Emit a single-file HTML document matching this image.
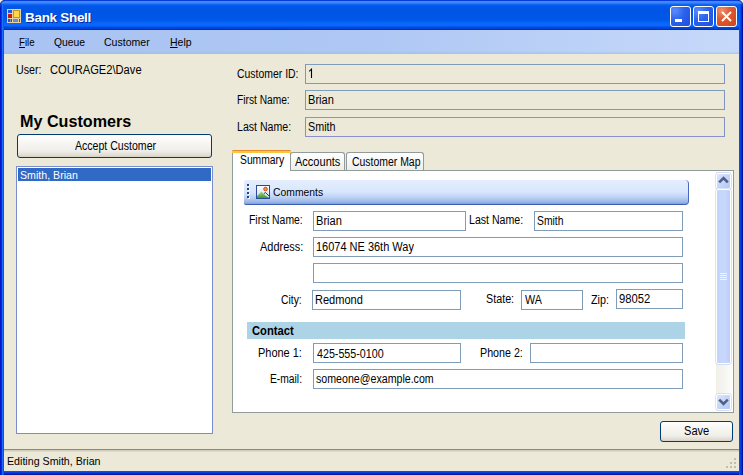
<!DOCTYPE html>
<html><head><meta charset="utf-8">
<style>
*{margin:0;padding:0;box-sizing:border-box}
html,body{width:743px;height:475px;overflow:hidden;background:#fff;font-family:"Liberation Sans",sans-serif;font-size:11px;color:#000}
.a{position:absolute}
#win{position:absolute;left:0;top:0;width:743px;height:475px;background:linear-gradient(to right,#0018C8 0,#0018C8 1px,#0828DC 1px,#0828DC 2px,#1C6AFF 2px,#1C6AFF 3px,#0C50EC 3px) left/4px 100% no-repeat,linear-gradient(to left,#0010A0 0,#0010A0 1px,#0030D0 1px,#0030D0 2px,#0840E0 2px,#0840E0 3px,#0A50F0 3px) right/4px 100% no-repeat,linear-gradient(to top,#0818A0 0,#0818A0 1px,#0030C8 1px,#0030C8 2px,#0840E0 2px,#0840E0 3px,#0A50F0 3px) bottom/100% 4px no-repeat,#0831D9;border-radius:5px 5px 0 0}
#title{position:absolute;left:0;top:0;width:743px;height:30px;border-radius:5px 5px 0 0;
 background:linear-gradient(to bottom,#0A3CD8 0px,#0A3CD8 1px,#3C8CFF 1px,#3A88FF 3px,#1868F4 4px,#0058E8 6px,#0055E5 12px,#0057E8 20px,#0866FC 23px,#0868FF 26px,#0048D8 27px,#0040D4 29px,#0030C8 29px,#0030C8 30px)}
#ttext{left:25px;top:10px;color:#fff;font-weight:bold;font-size:13.5px;letter-spacing:-0.3px;text-shadow:1px 1px 0 #0A2A9A}
.tb{position:absolute;top:6px;width:21px;height:21px;border:1px solid #fff;border-radius:3px;
 background:radial-gradient(circle at 20% 20%,#5C8CFA 0,#2C62EE 45%,#1D4EDC 100%)}
#menu{left:4px;top:30px;width:735px;height:24px;background:linear-gradient(to right,#A9C3F2 0,#AEC7F4 50%,#C7D9FA 100%)}
.mi{position:absolute;top:6px;font-size:11px;white-space:nowrap;letter-spacing:-0.2px}
.tbox{position:absolute;height:20px;border:1px solid #7F9DB9;background:#fff;padding:2px 0 0 2px;font-size:11px;letter-spacing:-0.2px;white-space:nowrap}
.ro{background:#ECE9D8;border-color:#7F9DB9 #7F93C4 #8A90CE #7F93C4}
.btn{position:absolute;border:1px solid #003C74;border-radius:3px;background:linear-gradient(to bottom,#FFFFFF 0,#F8F7F3 30%,#F0EFEA 70%,#E2DED4 90%,#D6D0C5 100%);text-align:center;font-size:11px;letter-spacing:-0.2px}
.t{position:absolute;white-space:nowrap;transform-origin:0 0;line-height:normal}
.tab{position:absolute;border:1px solid #919B9C;border-bottom:none;border-radius:3px 3px 0 0;background:linear-gradient(to bottom,#FFFFFF 0,#F7F7F4 50%,#EEEDE6 100%)}
.sbtn{position:absolute;width:15px;height:16px;border:1px solid #fff;border-radius:2px;background:linear-gradient(to bottom right,#DCE6FC 0,#C6D5FB 50%,#B4C8F6 100%);box-shadow:0 0 0 0.5px #B8C8EC}
</style></head><body>
<div id="win">
 <div id="title">
  <svg class="a" style="left:7px;top:9px" width="14" height="14" viewBox="0 0 14 14">
   <rect x="0" y="0" width="14" height="14" fill="#E8D0A0"/>
   <rect x="1" y="1" width="4" height="3" fill="#1C5CE0"/>
   <rect x="1" y="5" width="4" height="4" fill="#C81810"/>
   <rect x="6" y="1" width="7" height="8" fill="#C89418"/>
   <rect x="7" y="2" width="5" height="6" fill="#FFD84A"/>
   <rect x="1" y="10" width="2" height="3" fill="#2050D8"/>
   <rect x="3.5" y="10" width="1.5" height="3" fill="#2050D8"/>
   <rect x="6" y="10" width="5" height="3" fill="#6A88E0"/>
   <rect x="12" y="10" width="1" height="3" fill="#2050D8"/>
  </svg>
  <div id="ttext" class="a">Bank Shell</div>
  <div class="tb" style="left:670px"><div class="a" style="left:4px;top:12px;width:7px;height:3px;background:#fff"></div></div>
  <div class="tb" style="left:693px"><div class="a" style="left:4px;top:4px;width:11px;height:11px;border:1px solid #fff;border-top-width:3px"></div></div>
  <div class="tb" style="left:716px;background:radial-gradient(circle at 25% 20%,#F09070 0,#E05A30 40%,#CC4420 100%)">
   <svg class="a" style="left:4px;top:4px" width="11" height="11" viewBox="0 0 11 11"><path d="M1 1L10 10M10 1L1 10" stroke="#fff" stroke-width="2"/></svg>
  </div>
 </div>
 <div class="a" style="left:739px;top:4px;width:4px;height:26px;border-top-right-radius:4px;background:linear-gradient(to left,#0010A0 0,#0010A0 1px,#0030D0 1px,#0030D0 2px,#0848E8 2px,#0848E8 3px,#0A58F4 3px)"></div>
 <div class="a" style="left:0;top:4px;width:4px;height:26px;border-top-left-radius:4px;background:linear-gradient(to right,#0018C8 0,#0018C8 1px,#0838E0 1px,#0838E0 2px,#2070FF 2px,#2070FF 3px,#0C58F0 3px)"></div>
 <!-- corners -->
 <svg class="a" style="left:0;top:0" width="6" height="6" viewBox="0 0 6 6"><path d="M0 0H5Q0.5 0.5 0 5Z" fill="#F0F0E0"/><path d="M5 0.5Q0.5 0.5 0.5 5" stroke="#0A2AB0" stroke-width="1" fill="none"/></svg>
 <svg class="a" style="left:737px;top:0" width="6" height="6" viewBox="0 0 6 6"><path d="M1 0H6V5Q5.5 0.5 1 0Z" fill="#F0F0E0"/><path d="M1 0.5Q5.5 0.5 5.5 5" stroke="#0A2AB0" stroke-width="1" fill="none"/></svg>
 <div id="menu" class="a">



 </div>
 <div class="a" style="left:4px;top:51px;width:735px;height:3px;background:linear-gradient(to bottom,rgba(160,190,232,0),rgba(150,186,228,0.55))"></div>
 <div class="a" style="left:4px;top:54px;width:735px;height:417px;background:#ECE9D8"></div>
</div>
<!-- left panel -->
<div class="btn" style="left:17px;top:134px;width:195px;height:24px;padding-top:5px;padding-left:2px;letter-spacing:-0.1px"></div>
<div class="a" style="left:16px;top:166px;width:197px;height:268px;border:1px solid #7C8DCF;background:#fff">
 <div class="a" style="left:1px;top:1px;width:193px;height:13px;background:#316AC5;color:#fff;"></div>
</div>
<!-- right top -->
<div class="tbox ro" style="left:305px;top:64px;width:420px"></div>
<div class="tbox ro" style="left:305px;top:90px;width:420px"></div>
<div class="tbox ro" style="left:305px;top:117px;width:420px"></div>
<!-- tabs -->
<div class="a" style="left:232px;top:170px;width:502px;height:243px;border:1px solid #919B9C;background:#fff"></div>
<div class="tab" style="left:290px;top:152px;width:55px;height:18px"></div>
<div class="tab" style="left:346px;top:152px;width:78px;height:18px"></div>
<div class="a" style="left:232px;top:150px;width:59px;height:21px;border-left:1px solid #919B9C;border-right:1px solid #919B9C;border-radius:2px 2px 0 0;background:linear-gradient(to bottom,#E68B2C 0,#E68B2C 1px,#FFC83C 1px,#FFC83C 3px,#fff 3px)"></div>
<div class="a" style="left:232px;top:150px;width:59px;height:3px;border-radius:2px 2px 0 0;background:linear-gradient(to bottom,#E68B2C 0,#E68B2C 1px,#FFC83C 1px,#FFC83C 3px)"></div>
<!-- scrollbar -->
<div class="a" style="left:716px;top:172px;width:16px;height:239px;background:linear-gradient(to right,#F0EFE8,#FCFCF9)"></div>
<div class="sbtn" style="left:716px;top:173px"></div>
<svg class="a" style="left:718px;top:176px" width="11" height="8" viewBox="0 0 11 8"><path d="M1.2 6.3L5.5 2L9.8 6.3" stroke="#4D6185" stroke-width="2.6" fill="none"/></svg>
<div class="sbtn" style="left:716px;top:189px;height:175px;background:linear-gradient(to right,#C4D4FB 0,#C8D7FC 60%,#BCCDF8 100%)"></div>
<div class="a" style="left:720px;top:273px;width:7px;height:1px;background:#EEF4FE;box-shadow:0 2px 0 #EEF4FE,0 4px 0 #EEF4FE,0 6px 0 #EEF4FE"></div>
<div class="sbtn" style="left:716px;top:394px"></div>
<svg class="a" style="left:718px;top:398px" width="11" height="8" viewBox="0 0 11 8"><path d="M1.2 1.7L5.5 6L9.8 1.7" stroke="#4D6185" stroke-width="2.6" fill="none"/></svg>
<!-- comments bar -->
<div class="a" style="left:244px;top:180px;width:445px;height:25px;border-radius:2px 4px 4px 2px;border-right:1px solid #4868C0;border-bottom:1px solid #3D5DB0;background:linear-gradient(to bottom,#E4EEFE 0,#D8E6FC 50%,#BDD2F5 72%,#9AB6E8 92%,#7E9FE0 100%)"></div>
<div class="a" style="left:247px;top:184px;width:2px;height:2px;background:#23438C;box-shadow:1px 1px 0 #fff,0 4px 0 #23438C,1px 5px 0 #fff,0 8px 0 #23438C,1px 9px 0 #fff,0 12px 0 #23438C,1px 13px 0 #fff"></div>
<svg class="a" style="left:256px;top:185px" width="14" height="14" viewBox="0 0 14 14">
 <defs><linearGradient id="sky" x1="0" y1="0" x2="0" y2="1"><stop offset="0" stop-color="#FFFFFF"/><stop offset="1" stop-color="#C8DCF4"/></linearGradient>
 <linearGradient id="hill" x1="0" y1="0" x2="0" y2="1"><stop offset="0" stop-color="#A8D880"/><stop offset="1" stop-color="#3C9A2A"/></linearGradient></defs>
 <rect x="0.5" y="0.5" width="13" height="13" fill="url(#sky)" stroke="#2C4A9C"/>
 <path d="M1 13V11L5.5 6.5L10 11L13 12.5V13Z" fill="url(#hill)"/>
 <path d="M8 8.5L9.5 7.5L13 11" stroke="#2A3A5A" stroke-width="1" fill="none"/>
 <circle cx="9.5" cy="4" r="1.8" fill="#F0A020" stroke="#D83A20" stroke-width="0.9"/>
</svg>
<!-- form -->
<div class="tbox" style="left:313px;top:211px;width:153px"></div>
<div class="tbox" style="left:534px;top:211px;width:149px"></div>
<div class="tbox" style="left:313px;top:237px;width:370px"></div>
<div class="tbox" style="left:313px;top:263px;width:370px"></div>
<div class="tbox" style="left:312px;top:290px;width:149px"></div>
<div class="tbox" style="left:521px;top:290px;width:62px"></div>
<div class="tbox" style="left:616px;top:289px;width:67px"></div>
<div class="a" style="left:247px;top:322px;width:438px;height:17px;background:#ADD3E6"></div>
<div class="tbox" style="left:313px;top:343px;width:148px"></div>
<div class="tbox" style="left:530px;top:343px;width:153px"></div>
<div class="tbox" style="left:313px;top:369px;width:370px"></div>
<!-- status -->
<div class="a" style="left:4px;top:449px;width:735px;height:22px;background:#ECE9D8;border-top:1px solid #8F8C7A"></div>
<div class="a" style="left:4px;top:450px;width:735px;height:2px;background:linear-gradient(to bottom,#C8C5B3,#E4E1CF)"></div>
<!-- grip -->
<div class="a" style="left:734px;top:466px;width:2px;height:2px;background:#C2BEAC;box-shadow:-4px 0 0 #C2BEAC,-8px 0 0 #C2BEAC,0 -4px 0 #C2BEAC,-4px -4px 0 #C2BEAC,0 -8px 0 #C2BEAC"></div>
<!-- save -->
<div class="btn" style="left:660px;top:421px;width:73px;height:21px;padding-top:4px;letter-spacing:0.2px"></div>
<div class="t" style="left:19.00px;top:36px;font-size:11px;transform:scaleX(0.8824);"><u>F</u>ile</div>
<div class="t" style="left:54.00px;top:36px;font-size:11px;transform:scaleX(0.9394);">Queue</div>
<div class="t" style="left:104.04px;top:36px;font-size:11px;transform:scaleX(0.9574);">Customer</div>
<div class="t" style="left:170.00px;top:36px;font-size:11px;transform:scaleX(0.9545);"><u>H</u>elp</div>
<div class="t" style="left:273.06px;top:186px;font-size:11px;transform:scaleX(0.9423);">Comments</div>
<div class="t" style="left:7.03px;top:455px;font-size:11px;transform:scaleX(0.9684);">Editing Smith, Brian</div>
<div class="t" style="left:20.03px;top:169px;font-size:11px;color:#fff;transform:scaleX(0.9655);">Smith, Brian</div>
<div class="t" style="left:16.11px;top:63px;font-size:12px;transform:scaleX(0.8889);">User:</div>
<div class="t" style="left:50.07px;top:63px;font-size:12px;transform:scaleX(0.9278);">COURAGE2\Dave</div>
<div class="t" style="left:75.00px;top:139px;font-size:12px;transform:scaleX(0.8804);">Accept Customer</div>
<div class="t" style="left:237.13px;top:67px;font-size:12px;transform:scaleX(0.8696);">Customer ID:</div>
<div class="t" style="left:237.15px;top:93px;font-size:12px;transform:scaleX(0.8500);">First Name:</div>
<div class="t" style="left:237.12px;top:120px;font-size:12px;transform:scaleX(0.8814);">Last Name:</div>
<div class="t" style="left:308.08px;top:93px;font-size:12px;transform:scaleX(0.9231);">Brian</div>
<div class="t" style="left:308.10px;top:120px;font-size:12px;transform:scaleX(0.8966);">Smith</div>
<div class="t" style="left:240.14px;top:153px;font-size:12px;transform:scaleX(0.8600);">Summary</div>
<div class="t" style="left:295.00px;top:155px;font-size:12px;transform:scaleX(0.9184);">Accounts</div>
<div class="t" style="left:352.13px;top:155px;font-size:12px;transform:scaleX(0.8701);">Customer Map</div>
<div class="t" style="left:249.13px;top:213px;font-size:12px;transform:scaleX(0.8667);">First Name:</div>
<div class="t" style="left:316.08px;top:214px;font-size:12px;transform:scaleX(0.9231);">Brian</div>
<div class="t" style="left:469.12px;top:213px;font-size:12px;transform:scaleX(0.8814);">Last Name:</div>
<div class="t" style="left:537.14px;top:214px;font-size:12px;transform:scaleX(0.8621);">Smith</div>
<div class="t" style="left:260.00px;top:240px;font-size:12px;transform:scaleX(0.9130);">Address:</div>
<div class="t" style="left:316.08px;top:240px;font-size:12px;transform:scaleX(0.9151);">16074 NE 36th Way</div>
<div class="t" style="left:281.14px;top:293px;font-size:12px;transform:scaleX(0.8636);">City:</div>
<div class="t" style="left:315.08px;top:293px;font-size:12px;transform:scaleX(0.9200);">Redmond</div>
<div class="t" style="left:486.10px;top:292px;font-size:12px;transform:scaleX(0.8966);">State:</div>
<div class="t" style="left:525.00px;top:293px;font-size:12px;transform:scaleX(0.8947);">WA</div>
<div class="t" style="left:591.00px;top:293px;font-size:12px;transform:scaleX(0.8947);">Zip:</div>
<div class="t" style="left:619.06px;top:292px;font-size:12px;transform:scaleX(0.9375);">98052</div>
<div class="t" style="left:252.00px;top:324px;font-size:12px;font-weight:bold;transform:scaleX(0.9333);">Contact</div>
<div class="t" style="left:258.09px;top:346px;font-size:12px;transform:scaleX(0.9130);">Phone 1:</div>
<div class="t" style="left:317.00px;top:347px;font-size:12px;transform:scaleX(0.8919);">425-555-0100</div>
<div class="t" style="left:480.11px;top:346px;font-size:12px;transform:scaleX(0.8913);">Phone 2:</div>
<div class="t" style="left:270.14px;top:372px;font-size:12px;transform:scaleX(0.8571);">E-mail:</div>
<div class="t" style="left:316.11px;top:372px;font-size:12px;transform:scaleX(0.8855);">someone@example.com</div>
<div class="t" style="left:684.08px;top:424px;font-size:12px;transform:scaleX(0.9231);">Save</div>
<div class="t" style="left:19.99px;top:113px;font-size:16px;font-weight:bold;transform:scaleX(1.0092);">My Customers</div>
<svg class="a" style="left:308px;top:68px" width="6" height="11" viewBox="0 0 6 11"><path d="M1.2 3.3L3.5 1.2V10" stroke="#000" stroke-width="1.1" fill="none"/></svg>
</body></html>
